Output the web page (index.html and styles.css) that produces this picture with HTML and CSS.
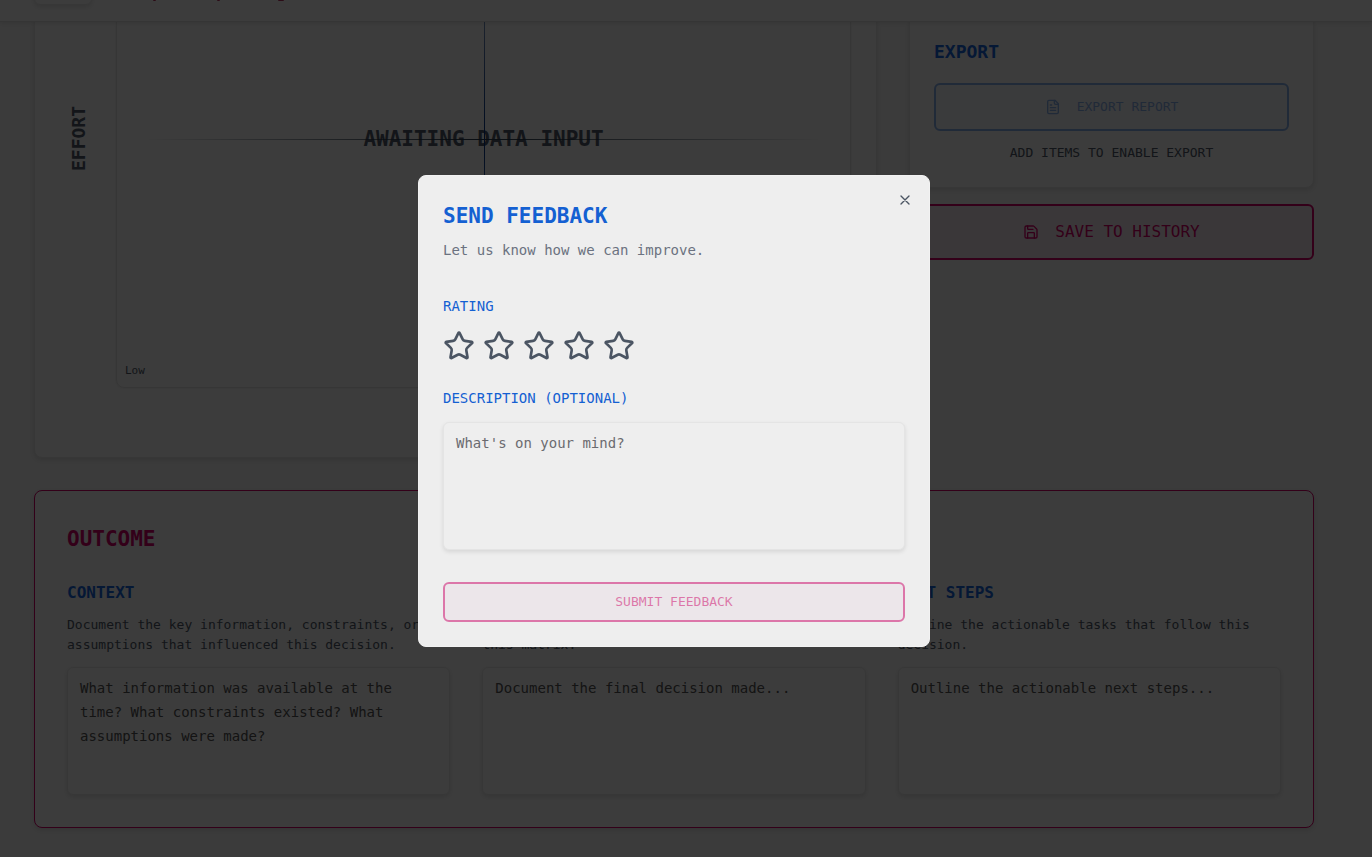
FILE: index.html
```html
<!DOCTYPE html>
<html lang="en">
<head>
  <meta charset="UTF-8" />
  <meta name="viewport" content="width=device-width, initial-scale=1.0"/>
  <title>Send Feedback</title>
  <link rel="stylesheet" href="styles.css">
</head>
<body>
  <header class="topbar">
    <button class="back" aria-label="Back"></button>
    <svg class="brand" viewBox="0 0 180 20" aria-hidden="true"><path d="M38 19h1M102 19h1M163 19h4"/></svg>
  </header>

  <main class="page">
    <div class="workspace">
      <section class="card matrix">
        <div class="axis-y">EFFORT</div>
        <div class="plot">
          <span class="line-h"></span>
          <span class="line-v"></span>
          <p class="waiting">AWAITING DATA INPUT</p>
          <span class="low">Low</span>
        </div>
        <div class="axis-x">IMPACT</div>
      </section>

      <aside class="side">
        <section class="card export">
          <h3>EXPORT</h3>
          <button class="btn btn-export" disabled>
            <svg class="icon" viewBox="0 0 24 24"><path d="M15 2H6a2 2 0 0 0-2 2v16a2 2 0 0 0 2 2h12a2 2 0 0 0 2-2V7Z"/><path d="M14 2v4a2 2 0 0 0 2 2h4"/><path d="M10 9H8M16 13H8M16 17H8"/></svg>
            EXPORT REPORT
          </button>
          <p class="hint">ADD ITEMS TO ENABLE EXPORT</p>
        </section>
        <button class="btn btn-save">
          <svg class="icon" viewBox="0 0 24 24"><path d="M15.2 3a2 2 0 0 1 1.4.6l3.8 3.8a2 2 0 0 1 .6 1.4V19a2 2 0 0 1-2 2H5a2 2 0 0 1-2-2V5a2 2 0 0 1 2-2z"/><path d="M17 21v-7a1 1 0 0 0-1-1H8a1 1 0 0 0-1 1v7"/><path d="M7 3v4a1 1 0 0 0 1 1h7"/></svg>
          SAVE TO HISTORY
        </button>
      </aside>
    </div>

    <section class="card outcome">
      <h2>OUTCOME</h2>
      <div class="columns">
        <div class="column">
          <h4><label for="context">CONTEXT</label></h4>
          <p>Document the key information, constraints, or assumptions that influenced this decision.</p>
          <textarea id="context" placeholder="What information was available at the time? What constraints existed? What assumptions were made?"></textarea>
        </div>
        <div class="column">
          <h4><label for="decision">DECISION</label></h4>
          <p>Record the final decision that was reached from this matrix.</p>
          <textarea id="decision" placeholder="Document the final decision made..."></textarea>
        </div>
        <div class="column">
          <h4><label for="steps">NEXT STEPS</label></h4>
          <p>Outline the actionable tasks that follow this decision.</p>
          <textarea id="steps" placeholder="Outline the actionable next steps..."></textarea>
        </div>
      </div>
    </section>
  </main>

  <div class="overlay">
    <form class="modal" role="dialog" aria-labelledby="modalTitle">
      <button type="button" class="close" aria-label="Close">
        <svg class="icon" viewBox="0 0 24 24"><path d="M18 6 6 18M6 6l12 12"/></svg>
      </button>
      <h2 id="modalTitle">SEND FEEDBACK</h2>
      <p class="intro">Let us know how we can improve.</p>

      <div class="label" id="ratingLabel">RATING</div>
      <div class="stars" role="group" aria-labelledby="ratingLabel">
        <button type="button" aria-label="1 star"><svg viewBox="0 0 24 24"><use href="#star"/></svg></button>
        <button type="button" aria-label="2 stars"><svg viewBox="0 0 24 24"><use href="#star"/></svg></button>
        <button type="button" aria-label="3 stars"><svg viewBox="0 0 24 24"><use href="#star"/></svg></button>
        <button type="button" aria-label="4 stars"><svg viewBox="0 0 24 24"><use href="#star"/></svg></button>
        <button type="button" aria-label="5 stars"><svg viewBox="0 0 24 24"><use href="#star"/></svg></button>
      </div>

      <label class="label" for="description">DESCRIPTION (OPTIONAL)</label>
      <textarea id="description" placeholder="What's on your mind?"></textarea>
      <button class="btn btn-submit" disabled>SUBMIT FEEDBACK</button>
    </form>
  </div>

  <svg class="symbols" aria-hidden="true">
    <symbol id="star" viewBox="0 0 24 24">
      <path d="M11.525 2.295a.53.53 0 0 1 .95 0l2.31 4.679a2.123 2.123 0 0 0 1.595 1.16l5.166.756a.53.53 0 0 1 .294.904l-3.736 3.638a2.123 2.123 0 0 0-.611 1.878l.882 5.14a.53.53 0 0 1-.771.56l-4.618-2.428a2.122 2.122 0 0 0-1.973 0L6.396 21.01a.53.53 0 0 1-.77-.56l.881-5.139a2.122 2.122 0 0 0-.611-1.879L2.16 9.795a.53.53 0 0 1 .294-.906l5.165-.755a2.122 2.122 0 0 0 1.597-1.16z"/>
    </symbol>
  </svg>
</body>
</html>
```

FILE: styles.css
```css
:root { --bg: #eee; --blue: #1460d2; --pink: #cc0066; --slate: #4b5563; --line: #e4e4e4; --gutter: 24px; }
* { box-sizing: border-box; }
html, body { height: 100%; }
body { margin: 0; overflow: hidden; background: #e9e9e9; color: var(--slate); font-family: "DejaVu Sans Mono", "Liberation Mono", monospace; font-size: 14px; line-height: 24px; }
h2, h3, h4, p { margin: 0; font-weight: normal; }
button, textarea { font: inherit; }
svg { fill: none; stroke: currentColor; stroke-width: 2; stroke-linecap: round; stroke-linejoin: round; }
.icon { width: 16px; height: 16px; flex: none; }
.symbols { display: none; }

/* header is half scrolled out of view */
.topbar { position: relative; z-index: 1; height: 72px; margin-top: -50px; padding: 14px 58px 0 34px; display: flex; align-items: flex-start; gap: 24px; background: var(--bg); border-bottom: 1px solid #d4d4d4; box-shadow: 0 1px 4px rgba(0,0,0,.1); }
.back { width: 58px; height: 41px; border: 1px solid #dcdcdc; border-radius: 6px; background: var(--bg); box-shadow: 0 2px 4px rgba(0,0,0,.1); }
.brand { width: 180px; height: 20px; margin-top: 17px; color: #b0305c; }

.page { margin-top: -158px; margin-right: var(--gutter); padding: 0 34px 28px; display: flex; flex-direction: column; gap: 32px; }
.workspace { display: grid; grid-template-columns: minmax(0, 1fr) 405px; gap: 32px; }
.card { border: 1px solid #dcdcdc; border-radius: 8px; background: var(--bg); box-shadow: 0 2px 4px rgba(0,0,0,.1); }

.matrix { padding: 24px 25px 24px 24px; display: grid; grid-template-columns: 40px minmax(0, 1fr); grid-template-rows: 499px 28px; gap: 17px; }
.axis-y { writing-mode: vertical-rl; transform: rotate(180deg); display: flex; align-items: center; justify-content: center; font-size: 18px; font-weight: bold; }
.axis-x { grid-column: 2; text-align: center; font-size: 18px; line-height: 28px; }
.plot { position: relative; display: flex; align-items: center; justify-content: center; border: 1px solid #d8d8d8; border-radius: 8px; box-shadow: 0 0 2px rgba(0,0,0,.1); }
.line-h { position: absolute; left: 0; right: 0; top: 50%; height: 1px; background: linear-gradient(to right, transparent 4%, #234 50%, transparent 96%); }
.line-v { position: absolute; top: 0; bottom: 0; left: 50%; width: 1px; background: linear-gradient(transparent, #003080 50%, transparent); }
.waiting { font-size: 21px; font-weight: bold; }
.low { position: absolute; left: 8px; bottom: 6px; font-size: 11px; line-height: 20px; }

.side { padding-top: 149px; display: flex; flex-direction: column; gap: 16px; }
.export { padding: 24px; }
.export h3 { color: var(--blue); font-size: 18px; line-height: 28px; font-weight: bold; margin-bottom: 17px; }
.hint { margin-top: 12px; font-size: 13px; line-height: 20px; text-align: center; }

.btn { width: 100%; display: flex; align-items: center; justify-content: center; gap: 16px; border: 2px solid currentColor; border-radius: 6px; font-size: 13px; cursor: pointer; }
.btn:disabled { opacity: .5; cursor: default; }
.btn-export { height: 48px; color: var(--blue); background: #e0e6ee; }
.btn-save { height: 56px; color: var(--pink); background: #e8dce1; font-size: 16px; }
.btn-submit { height: 40px; margin-top: 32px; color: var(--pink); background: #ebe0e8; }

.outcome { padding: 32px; border-color: var(--pink); }
.outcome h2 { color: var(--pink); font-size: 21px; line-height: 32px; font-weight: bold; margin-bottom: 24px; }
.columns { display: grid; grid-template-columns: repeat(3, minmax(0, 1fr)); gap: 32px; }
.column h4 { color: var(--blue); font-size: 16px; line-height: 28px; font-weight: bold; margin-bottom: 8px; }
.column p { font-size: 13px; line-height: 20px; margin-bottom: 12px; }

textarea { display: block; width: 100%; height: 128px; padding: 8px 12px; border: 1px solid var(--line); border-radius: 6px; background: var(--bg); box-shadow: 0 2px 4px rgba(0,0,0,.1); color: #333; resize: none; }
textarea::placeholder { color: #6b6b70; opacity: 1; }
.column textarea { border-color: #dcdcdc; }
.column textarea::placeholder { color: #505050; }

.overlay { position: fixed; inset: 0; z-index: 10; padding: 0 var(--gutter) 35px 0; display: flex; align-items: center; justify-content: center; background: rgba(0,0,0,.75); }
.modal { position: relative; width: 100%; max-width: 512px; padding: 24px; border: 1px solid #f2f2f2; border-radius: 8px; background: var(--bg); }
.modal h2 { color: var(--blue); font-size: 21px; line-height: 32px; font-weight: bold; }
.intro { margin: 6px 0 32px; color: #6b7280; }
.label { display: block; color: var(--blue); margin-bottom: 12px; }
.stars { display: flex; gap: 8px; margin-bottom: 24px; }
.stars button { padding: 0; border: none; background: none; color: var(--slate); cursor: pointer; }
.stars svg { display: block; width: 32px; height: 32px; }
.close { position: absolute; top: 16px; right: 16px; padding: 0; border: none; background: none; color: var(--slate); cursor: pointer; }
.close svg { display: block; }
```
